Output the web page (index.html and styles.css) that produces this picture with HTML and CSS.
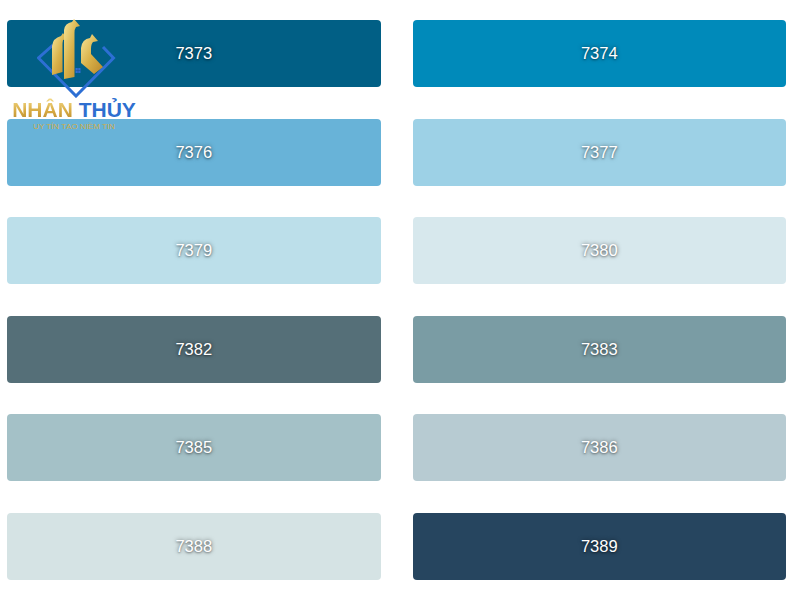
FILE: index.html
```html
<!DOCTYPE html>
<html lang="vi">
<head>
<meta charset="utf-8">
<title>Bảng màu</title>
<link rel="stylesheet" href="styles.css">
</head>
<body>
<div class="page">
  <div class="grid">
    <div class="swatch c7373">7373</div>
    <div class="swatch c7374">7374</div>
    <div class="swatch c7376">7376</div>
    <div class="swatch c7377">7377</div>
    <div class="swatch c7379">7379</div>
    <div class="swatch c7380">7380</div>
    <div class="swatch c7382">7382</div>
    <div class="swatch c7383">7383</div>
    <div class="swatch c7385">7385</div>
    <div class="swatch c7386">7386</div>
    <div class="swatch c7388">7388</div>
    <div class="swatch c7389">7389</div>
  </div>
  <div class="logo">
    <svg class="mark" width="80" height="80" viewBox="0 0 80 80">
      <defs>
        <linearGradient id="gold" x1="0" y1="0" x2="1" y2="1">
          <stop offset="0" stop-color="#f6e59a"/>
          <stop offset="0.5" stop-color="#d9b24a"/>
          <stop offset="1" stop-color="#b8862a"/>
        </linearGradient>
      </defs>
      <path d="M16 27 L1.5 40 L39 78 L76.5 40 L66 29" fill="none" stroke="#2d6fd4" stroke-width="3" stroke-linejoin="miter"/>
      <path d="M15 28 Q16 20 24 18 L26 15 L30 21 L26 22 Q25.5 24 25.5 28 L25.5 54 L15 57 Z" fill="url(#gold)"/>
      <path d="M27 12 Q28 5 35 4 L37 1 L43 8 L39 9 Q37.5 11 37.5 15 L37.5 59 L27 61 Z" fill="url(#gold)"/>
      <path d="M44 30 Q45 21 53 20 L55 16 L61 23 L56 24 Q54 26 54 31 L54 36 L66 49 L57 56 L44 45 Z" fill="url(#gold)"/>
      <rect x="38.5" y="50" width="5" height="5" fill="#2d6fd4"/>
      <path d="M41 50 V55 M38.5 52.5 H43.5" stroke="#1b4f9a" stroke-width="0.6"/>
    </svg>
    <div class="brand"><span class="gold">NHÂN</span> <span class="blue">THỦY</span></div>
    <div class="tag">UY TÍN TẠO NIỀM TIN</div>
  </div>
</div>
</body>
</html>
```
FILE: styles.css
```css
html, body {
  margin: 0;
  padding: 0;
  background: #ffffff;
}
body {
  font-family: "Liberation Sans", Arial, sans-serif;
}
.page {
  position: relative;
  width: 800px;
  height: 600px;
  overflow: hidden;
}
.grid {
  margin: 20px 0 0 7px;
  width: 779px;
  display: grid;
  grid-template-columns: 1fr 1fr;
  column-gap: 32px;
  row-gap: 31.6px;
}
.swatch {
  height: 67px;
  border-radius: 4px;
  display: flex;
  align-items: center;
  justify-content: center;
  color: #ffffff;
  font-size: 16.5px;
  text-shadow: 0 0 4px rgba(0, 0, 0, 0.55), 0 1px 2px rgba(0, 0, 0, 0.35);
}
.c7373 { background: #015f85; }
.c7374 { background: #008aba; }
.c7376 { background: #68b3d8; }
.c7377 { background: #9dd1e6; }
.c7379 { background: #bcdfea; }
.c7380 { background: #d7e8ed; }
.c7382 { background: #556f78; }
.c7383 { background: #7a9ca4; }
.c7385 { background: #a4c1c7; }
.c7386 { background: #b7cbd2; }
.c7388 { background: #d5e3e4; }
.c7389 { background: #26455f; }

.logo {
  position: absolute;
  left: 10px;
  top: 18px;
  width: 128px;
  display: flex;
  flex-direction: column;
  align-items: center;
}
.mark {
  display: block;
  margin-left: 5px;
}
.brand {
  margin-top: 1px;
  font-family: "Liberation Sans", Arial, sans-serif;
  font-weight: bold;
  font-size: 21px;
  line-height: 22px;
  white-space: nowrap;
}
.gold {
  background: linear-gradient(180deg, #f3db8a 0%, #d8ac45 55%, #b88a2e 100%);
  -webkit-background-clip: text;
  background-clip: text;
  color: transparent;
}
.blue {
  color: #2e6fd0;
}
.tag {
  margin-top: 1px;
  font-size: 8px;
  line-height: 10px;
  color: #d2ad48;
  white-space: nowrap;
}
```
